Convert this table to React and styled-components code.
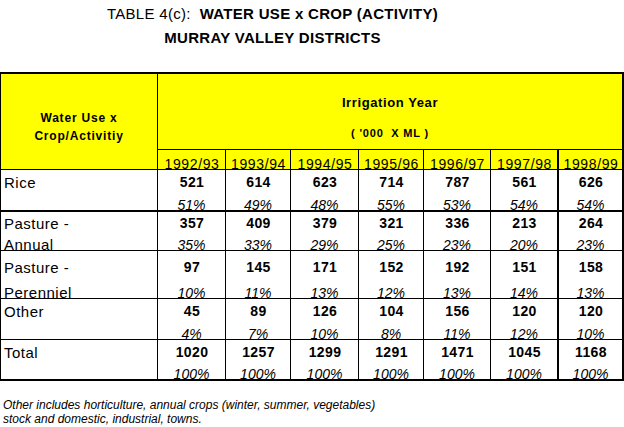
import React from "react";
import styled, { createGlobalStyle } from "styled-components";

const GlobalStyle = createGlobalStyle`
  html, body { margin: 0; padding: 0; background: #ffffff; }
  body {
    font-family: "Liberation Sans", Arial, sans-serif;
    color: #000000;
  }
`;

const Page = styled.div`
  width: 624px;
  display: flex;
  flex-direction: column;
`;

const Title = styled.h1`
  width: 545px;
  margin: 0;
  padding-top: 2px;
  font-size: 15px;
  line-height: 24px;
  font-weight: bold;
  text-align: center;
  white-space: pre;
  letter-spacing: 0.3px;
`;

const TitleLight = styled.span`
  font-weight: normal;
`;

const Sheet = styled.div`
  margin-top: 22px;
  box-sizing: border-box;
  width: 624px;
  display: grid;
  grid-template-columns: 157px 68px 65px 68px 65px 67px 68px 63px;
  grid-template-rows: 76px 20px 42px 39px 48px 41px 39px;
  border-top: 2px solid #000;
  border-left: 1px solid #000;
  border-right: 2px solid #000;
  border-bottom: 2px solid #000;
`;

const HeaderLabel = styled.div`
  grid-row: 1 / span 2;
  grid-column: 1;
  box-sizing: border-box;
  background: #ffff00;
  border-right: 1px solid #000;
  border-bottom: 1px solid #000;
  display: flex;
  flex-direction: column;
  align-items: center;
  justify-content: center;
  padding-top: 10px;
  font-size: 12px;
  line-height: 18px;
  font-weight: bold;
  letter-spacing: 0.8px;
  text-align: center;
`;

const HeaderGroup = styled.div`
  grid-row: 1;
  grid-column: 2 / span 7;
  box-sizing: border-box;
  background: #ffff00;
  border-bottom: 1px solid #000;
  display: flex;
  flex-direction: column;
  align-items: center;
  padding-top: 21px;
  font-weight: bold;
`;

const GroupTitle = styled.div`
  font-size: 13px;
  line-height: 16px;
  letter-spacing: 0.6px;
`;

const GroupUnit = styled.div`
  margin-top: 16px;
  font-size: 11px;
  line-height: 12px;
  letter-spacing: 0.8px;
  white-space: pre;
`;

const lineWidth = (col) => (col === 7 ? 0 : col === 6 ? 2 : 1);

const YearCell = styled.div`
  box-sizing: border-box;
  background: #ffff00;
  border-right: ${(p) => lineWidth(p.$col)}px solid #000;
  border-bottom: 1px solid #000;
  display: flex;
  align-items: flex-end;
  justify-content: center;
  font-size: 14px;
  line-height: 10px;
  letter-spacing: 0.6px;
  padding-left: 1px;
`;

const Cell = styled.div`
  box-sizing: border-box;
  background: #ffffff;
  border-bottom: ${(p) => p.$bottom}px solid #000;
  display: flex;
  flex-direction: column;
  justify-content: space-between;
  padding-top: ${(p) => p.$pad}px;
`;

const LabelCell = styled(Cell)`
  border-right: 1px solid #000;
  padding-left: 3px;
  font-size: 15px;
  letter-spacing: 0.5px;
`;

const DataCell = styled(Cell)`
  border-right: ${(p) => lineWidth(p.$col)}px solid #000;
  align-items: center;
  font-size: 14px;
`;

const TopLine = styled.div`
  line-height: 13px;
`;

const BottomLine = styled.div`
  line-height: 10px;
`;

const Value = styled(TopLine)`
  font-weight: bold;
  letter-spacing: 0.4px;
  padding-left: 1px;
`;

const Share = styled(BottomLine)`
  font-style: italic;
`;

const Footnote = styled.p`
  margin: 17px 0 0 0;
  padding-left: 3px;
  font-size: 12px;
  line-height: 14px;
  font-style: italic;
`;

const years = ["1992/93", "1993/94", "1994/95", "1995/96", "1996/97", "1997/98", "1998/99"];

const rows = [
  { label: ["Rice"], values: [521, 614, 623, 714, 787, 561, 626], shares: [51, 49, 48, 55, 53, 54, 54], pad: 6, bottom: 2 },
  { label: ["Pasture -", "Annual"], values: [357, 409, 379, 321, 336, 213, 264], shares: [35, 33, 29, 25, 23, 20, 23], pad: 5, bottom: 1 },
  { label: ["Pasture -", "Perenniel"], values: [97, 145, 171, 152, 192, 151, 158], shares: [10, 11, 13, 12, 13, 14, 13], pad: 10, bottom: 1 },
  { label: ["Other"], values: [45, 89, 126, 104, 156, 120, 120], shares: [4, 7, 10, 8, 11, 12, 10], pad: 6, bottom: 1 },
  { label: ["Total"], values: [1020, 1257, 1299, 1291, 1471, 1045, 1168], shares: [100, 100, 100, 100, 100, 100, 100], pad: 6, bottom: 0 },
];

export default function App() {
  return (
    <Page>
      <GlobalStyle />
      <Title>
        <TitleLight>TABLE 4(c):  </TitleLight>WATER USE x CROP (ACTIVITY)
        {"\n"}MURRAY VALLEY DISTRICTS
      </Title>
      <Sheet>
        <HeaderLabel>
          <div>Water Use x</div>
          <div>Crop/Activitiy</div>
        </HeaderLabel>
        <HeaderGroup>
          <GroupTitle>Irrigation Year</GroupTitle>
          <GroupUnit>{"( '000  X ML )"}</GroupUnit>
        </HeaderGroup>
        {years.map((y, i) => (
          <YearCell key={y} $col={i + 1}>{y}</YearCell>
        ))}
        {rows.map((r) => (
          <React.Fragment key={r.label.join(" ")}>
            <LabelCell $pad={r.pad} $bottom={r.bottom}>
              <TopLine>{r.label[0]}</TopLine>
              {r.label[1] ? <BottomLine>{r.label[1]}</BottomLine> : <span />}
            </LabelCell>
            {r.values.map((v, i) => (
              <DataCell key={i} $col={i + 1} $pad={r.pad} $bottom={r.bottom}>
                <Value>{v}</Value>
                <Share>{r.shares[i]}%</Share>
              </DataCell>
            ))}
          </React.Fragment>
        ))}
      </Sheet>
      <Footnote>
        Other includes horticulture, annual crops (winter, summer, vegetables)
        <br />
        stock and domestic, industrial, towns.
      </Footnote>
    </Page>
  );
}
